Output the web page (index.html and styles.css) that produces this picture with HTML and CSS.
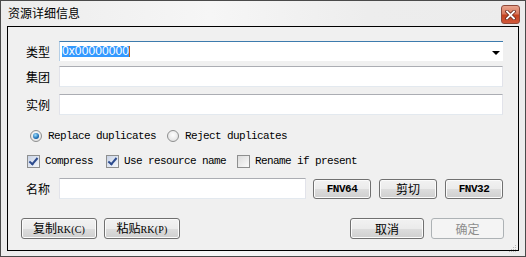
FILE: index.html
```html
<!DOCTYPE html>
<html lang="zh-cn">
  <head>
    <meta charset="UTF-8" />
    <title>资源详细信息</title>
    <link rel="stylesheet" href="styles.css">
  </head>
  <body>
    <div class="window">
      <div class="titlebar">
        <span class="title">资源详细信息</span>
        <div class="close">
          <svg width="11" height="10" viewBox="0 0 11 10">
            <path d="M2 1.5 L9 8.5 M9 1.5 L2 8.5" stroke="#6b2a1c" stroke-width="3.4" stroke-linecap="square"/>
            <path d="M2 1.5 L9 8.5 M9 1.5 L2 8.5" stroke="#ffffff" stroke-width="1.8" stroke-linecap="square"/>
          </svg>
        </div>
      </div>

      <div class="client">
        <div class="field-row first">
          <label>类型</label>
          <div class="combo">
            <span class="sel">0x00000000</span>
            <span class="arrow"></span>
          </div>
        </div>
        <div class="field-row second">
          <label>集团</label>
          <input class="text" />
        </div>
        <div class="field-row third">
          <label>实例</label>
          <input class="text" />
        </div>

        <div class="radio-row">
          <span class="radio on"></span>
          <span class="opt">Replace duplicates</span>
          <span class="radio next"></span>
          <span class="opt">Reject duplicates</span>
        </div>

        <div class="check-row">
          <span class="check on"></span>
          <span class="opt">Compress</span>
          <span class="check on c2"></span>
          <span class="opt">Use resource name</span>
          <span class="check c3"></span>
          <span class="opt">Rename if present</span>
        </div>

        <div class="field-row name-row">
          <label>名称</label>
          <input class="text name" />
          <button class="btn small mono">FNV64</button>
          <button class="btn small">剪切</button>
          <button class="btn small mono">FNV32</button>
        </div>

        <div class="bottom-row">
          <button class="btn wide">复制<span class="lat">RK(C)</span></button>
          <button class="btn wide">粘贴<span class="lat">RK(P)</span></button>
          <span class="spacer"></span>
          <button class="btn act">取消</button>
          <button class="btn act ok" disabled>确定</button>
        </div>

        <div class="grip">
          <svg width="10" height="10" viewBox="0 0 10 10" fill="#b8b8b8">
            <rect x="8" y="2" width="1" height="1"/>
            <rect x="6" y="4" width="1" height="1"/>
            <rect x="8" y="4" width="1" height="1"/>
            <rect x="4" y="6" width="1" height="1"/>
            <rect x="6" y="6" width="1" height="1"/>
            <rect x="8" y="6" width="1" height="1"/>
            <rect x="2" y="8" width="1" height="1"/>
            <rect x="4" y="8" width="1" height="1"/>
            <rect x="6" y="8" width="1" height="1"/>
            <rect x="8" y="8" width="1" height="1"/>
          </svg>
        </div>
      </div>
    </div>
  </body>
</html>
```

FILE: styles.css
```css
body {
  margin: 0;
  font-family: "Noto Sans CJK SC", "Liberation Sans", sans-serif;
  font-size: 12px;
  color: #000;
  background: #f0f0f0;
}

.window {
  width: 526px;
  height: 257px;
  box-sizing: border-box;
  border: 1px solid #4a4a4a;
  background: linear-gradient(90deg, #ececec 0%, #f6f6f6 40%, #ededed 70%, #ececec 100%);
  display: flex;
  flex-direction: column;
}

.titlebar {
  height: 25px;
  display: flex;
  align-items: flex-start;
  padding: 0 5px 0 7px;
}

.title {
  margin-top: 3px;
  font-size: 12px;
  line-height: 18px;
  color: #000;
}

.close {
  margin-left: auto;
  margin-top: 4px;
  width: 19px;
  height: 19px;
  box-sizing: border-box;
  border: 1px solid #8f4a3a;
  border-radius: 3px;
  background: linear-gradient(#e9a58e 0%, #d97a5e 45%, #c4431f 55%, #d2583a 100%);
  display: flex;
  align-items: center;
  justify-content: center;
}

.client {
  position: relative;
  margin: 0 6px;
  height: 225px;
  box-sizing: border-box;
  border: 1px solid #000;
  background: #f0f0f0;
  display: flex;
  flex-direction: column;
}

.field-row {
  display: flex;
  align-items: center;
  padding: 0 15px 0 18px;
}

.field-row label {
  width: 33px;
  flex: none;
}

.first {
  margin-top: 14px;
}

.second {
  margin-top: 5px;
}

.third {
  margin-top: 7px;
}

.combo {
  flex: 1;
  height: 20px;
  box-sizing: border-box;
  background: #fff;
  border-top: 1px solid #3d7bad;
  border-left: 1px solid #b5cfe7;
  display: flex;
  align-items: center;
  padding-left: 2px;
}

.sel {
  background: #3399ff;
  color: #fff;
  font-family: "Liberation Sans", sans-serif;
  font-size: 12px;
  line-height: 11px;
  border-right: 1px solid #c06010;
  letter-spacing: 0.1px;
}

.arrow {
  margin-left: auto;
  margin-right: 3px;
  width: 0;
  height: 0;
  border-left: 4px solid transparent;
  border-right: 4px solid transparent;
  border-top: 4px solid #000;
  margin-top: 2px;
}

.text {
  flex: 1;
  height: 21px;
  box-sizing: border-box;
  margin: 0;
  padding: 0;
  background: #fff;
  border: 1px solid #e2e3ea;
  border-top-color: #abadb3;
  border-bottom-color: #e3e9ef;
}

.radio-row,
.check-row {
  display: flex;
  align-items: center;
  height: 14px;
  font-family: "Liberation Mono", monospace;
  font-size: 11px;
  letter-spacing: -0.6px;
}

.radio-row {
  margin-top: 14px;
  padding-left: 22px;
}

.check-row {
  margin-top: 11px;
  padding-left: 19px;
}

.radio {
  width: 12px;
  height: 12px;
  box-sizing: border-box;
  border-radius: 50%;
  border: 1px solid #8e8f8f;
  background: radial-gradient(circle at 50% 40%, #fefefe, #dcdcdc);
  margin-right: 6px;
  position: relative;
}

.radio.on::after {
  content: "";
  position: absolute;
  left: 2px;
  top: 2px;
  width: 6px;
  height: 6px;
  border-radius: 50%;
  background: radial-gradient(circle at 40% 35%, #9fe0ff, #1e6fb5 60%, #0c3e75);
}

.radio.next {
  margin-left: 11px;
}

.check {
  width: 13px;
  height: 13px;
  box-sizing: border-box;
  border: 1px solid #8e8f8f;
  background: linear-gradient(135deg, #dcdcdc, #fbfbfb);
  margin-right: 5px;
  position: relative;
}

.check.on {
  background: linear-gradient(135deg, #c9d3e6, #f4f7fb);
}

.check.on::after {
  content: "";
  position: absolute;
  left: 3px;
  top: 0px;
  width: 3px;
  height: 7px;
  border: solid #2c4b8e;
  border-width: 0 2px 2px 0;
  transform: rotate(40deg);
}

.check.c2 {
  margin-left: 13px;
}

.check.c3 {
  margin-left: 11px;
}

.name-row {
  margin-top: 10px;
}

.text.name {
  flex: none;
  width: 247px;
  margin-right: 7px;
}

.btn {
  height: 20px;
  box-sizing: border-box;
  margin: 0;
  padding: 0;
  border: 1px solid #707070;
  border-radius: 3px;
  background: linear-gradient(#f2f2f2 0%, #ebebeb 50%, #dddddd 51%, #cfcfcf 100%);
  box-shadow: inset 0 0 0 1px #fbfbfb;
  font-family: "Noto Sans CJK SC", "Liberation Sans", sans-serif;
  font-size: 12px;
  color: #000;
  line-height: 16px;
}

.btn.small {
  width: 59px;
}

.btn.small + .btn.small {
  margin-left: 8px;
}

.mono {
  font-family: "Liberation Mono", monospace;
  font-weight: bold;
  font-size: 11px;
  letter-spacing: -0.5px;
}

.bottom-row {
  margin-top: 19px;
  display: flex;
  align-items: center;
  padding: 0 14px 0 13px;
}

.btn.wide {
  width: 76px;
  height: 21px;
  margin-right: 7px;
}

.lat {
  font-family: "Liberation Serif", serif;
  font-size: 10px;
  letter-spacing: 0.2px;
}

.spacer {
  flex: 1;
}

.btn.act {
  width: 74px;
  height: 21px;
}

.btn.act.ok {
  width: 73px;
  margin-left: 7px;
}

.btn:disabled {
  border-color: #adb2b5;
  background: #f4f4f4;
  box-shadow: none;
  color: #8d8d8d;
}

.grip {
  position: absolute;
  right: 1px;
  bottom: 1px;
  width: 10px;
  height: 10px;
}
```
